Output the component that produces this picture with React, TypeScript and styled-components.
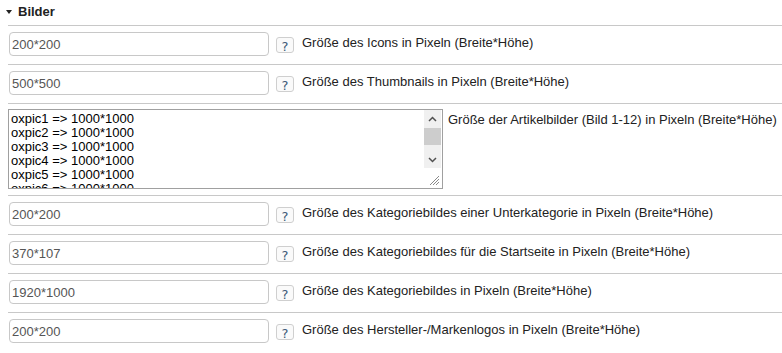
import React from "react";
import styled, { createGlobalStyle } from "styled-components";

const Global = createGlobalStyle`
  html, body { margin: 0; padding: 0; background: #fff; }
  body {
    font-family: "Liberation Sans", Arial, sans-serif;
    font-size: 13px;
    color: #222;
  }
`;

const Section = styled.div`
  width: 782px;
`;

const Header = styled.div`
  display: flex;
  align-items: center;
  height: 25px;
  padding-left: 6px;
  gap: 6px;
  font-weight: bold;
  font-size: 13px;
  color: #222;
  box-sizing: border-box;
  padding-bottom: 3px;
`;

const Caret = styled.span`
  width: 0;
  height: 0;
  border-left: 3.5px solid transparent;
  border-right: 3.5px solid transparent;
  border-top: 4px solid #222;
  margin-top: 1px;
`;

const List = styled.div`
  margin-left: 8px;
`;

const Row = styled.div<{ $tall?: boolean }>`
  display: flex;
  align-items: flex-start;
  border-top: 1px solid #c8c8c8;
  padding: ${(p) => (p.$tall ? "5px 0 6px 0" : "6px 0 8px 0")};
`;

const TextInput = styled.input`
  box-sizing: border-box;
  width: 260px;
  height: 24px;
  margin: 0 0 0 1px;
  padding: 0 2px;
  border: 1px solid #c8c8c8;
  border-radius: 4px;
  font-family: "Liberation Sans", Arial, sans-serif;
  font-size: 13px;
  color: #555;
  background: #fff;
  outline: none;
`;

const AreaBox = styled.div`
  box-sizing: border-box;
  display: flex;
  width: 435px;
  height: 80px;
  border: 1px solid #a0a0a0;
  background: #fff;
`;

const Area = styled.textarea`
  flex: 1;
  min-width: 0;
  margin: 0;
  padding: 2px 2px 0 2px;
  border: none;
  font-family: "Liberation Sans", Arial, sans-serif;
  font-size: 13px;
  line-height: 14px;
  color: #000;
  background: transparent;
  overflow: hidden;
  resize: none;
  outline: none;
`;

const ScrollCol = styled.div`
  display: flex;
  flex-direction: column;
  width: 17px;
  margin-right: 1px;
`;

const Track = styled.div`
  display: flex;
  flex-direction: column;
  height: 58px;
  background: #f0f0f0;
`;

const ArrowBtn = styled.div`
  display: flex;
  align-items: center;
  justify-content: center;
  height: 17px;
  flex: none;
`;

const Thumb = styled.div`
  height: 17px;
  margin-top: 1px;
  background: #cdcdcd;
  flex: none;
`;

const Spacer = styled.div`
  flex: 1;
`;

const Grip = styled.div`
  flex: 1;
  display: flex;
  align-items: flex-end;
  justify-content: flex-end;
  padding: 0 1px 2px 0;
`;

const HelpButton = styled.span`
  box-sizing: border-box;
  display: flex;
  align-items: center;
  justify-content: center;
  width: 18px;
  height: 16px;
  margin: 5px 0 0 7px;
  border: 1px solid #cfcfcf;
  border-radius: 3px;
  background: #fafafa;
  font-family: "DejaVu Sans", Verdana, sans-serif;
  font-size: 13px;
  font-weight: normal;
  color: #3d5a78;
  line-height: 1;
  padding-top: 2px;
`;

const Label = styled.span<{ $gap?: number }>`
  margin: 3px 0 0 ${(p) => p.$gap ?? 8}px;
  line-height: 16px;
  color: #222;
  white-space: nowrap;
`;

const Chevron = ({ up }: { up?: boolean }) => (
  <svg width="9" height="6" viewBox="0 0 9 6">
    <path
      d={up ? "M1 5 L4.5 1.5 L8 5" : "M1 1 L4.5 4.5 L8 1"}
      fill="none"
      stroke="#505050"
      strokeWidth="1.5"
    />
  </svg>
);

const GripIcon = () => (
  <svg width="12" height="12" viewBox="0 0 12 12">
    <path d="M11 2 L2 11 M11 5 L5 11 M11 8 L8 11" stroke="#8a8a8a" strokeWidth="1" />
  </svg>
);

const rows = [
  { value: "200*200", label: "Größe des Icons in Pixeln (Breite*Höhe)" },
  { value: "500*500", label: "Größe des Thumbnails in Pixeln (Breite*Höhe)" },
  { area: true, label: "Größe der Artikelbilder (Bild 1-12) in Pixeln (Breite*Höhe)" },
  { value: "200*200", label: "Größe des Kategoriebildes einer Unterkategorie in Pixeln (Breite*Höhe)" },
  { value: "370*107", label: "Größe des Kategoriebildes für die Startseite in Pixeln (Breite*Höhe)" },
  { value: "1920*1000", label: "Größe des Kategoriebildes in Pixeln (Breite*Höhe)" },
  { value: "200*200", label: "Größe des Hersteller-/Markenlogos in Pixeln (Breite*Höhe)" },
];

const areaText = Array.from({ length: 12 }, (_, i) => `oxpic${i + 1} => 1000*1000`).join("\n");

export default function App() {
  return (
    <Section>
      <Global />
      <Header>
        <Caret />
        <span>Bilder</span>
      </Header>
      <List>
        {rows.map((r, i) =>
          r.area ? (
            <Row key={i} $tall>
              <AreaBox>
                <Area defaultValue={areaText} />
                <ScrollCol>
                  <Track>
                    <ArrowBtn>
                      <Chevron up />
                    </ArrowBtn>
                    <Thumb />
                    <Spacer />
                    <ArrowBtn>
                      <Chevron />
                    </ArrowBtn>
                  </Track>
                  <Grip>
                    <GripIcon />
                  </Grip>
                </ScrollCol>
              </AreaBox>
              <Label $gap={5}>{r.label}</Label>
            </Row>
          ) : (
            <Row key={i}>
              <TextInput defaultValue={r.value} />
              <HelpButton>?</HelpButton>
              <Label>{r.label}</Label>
            </Row>
          )
        )}
      </List>
    </Section>
  );
}
